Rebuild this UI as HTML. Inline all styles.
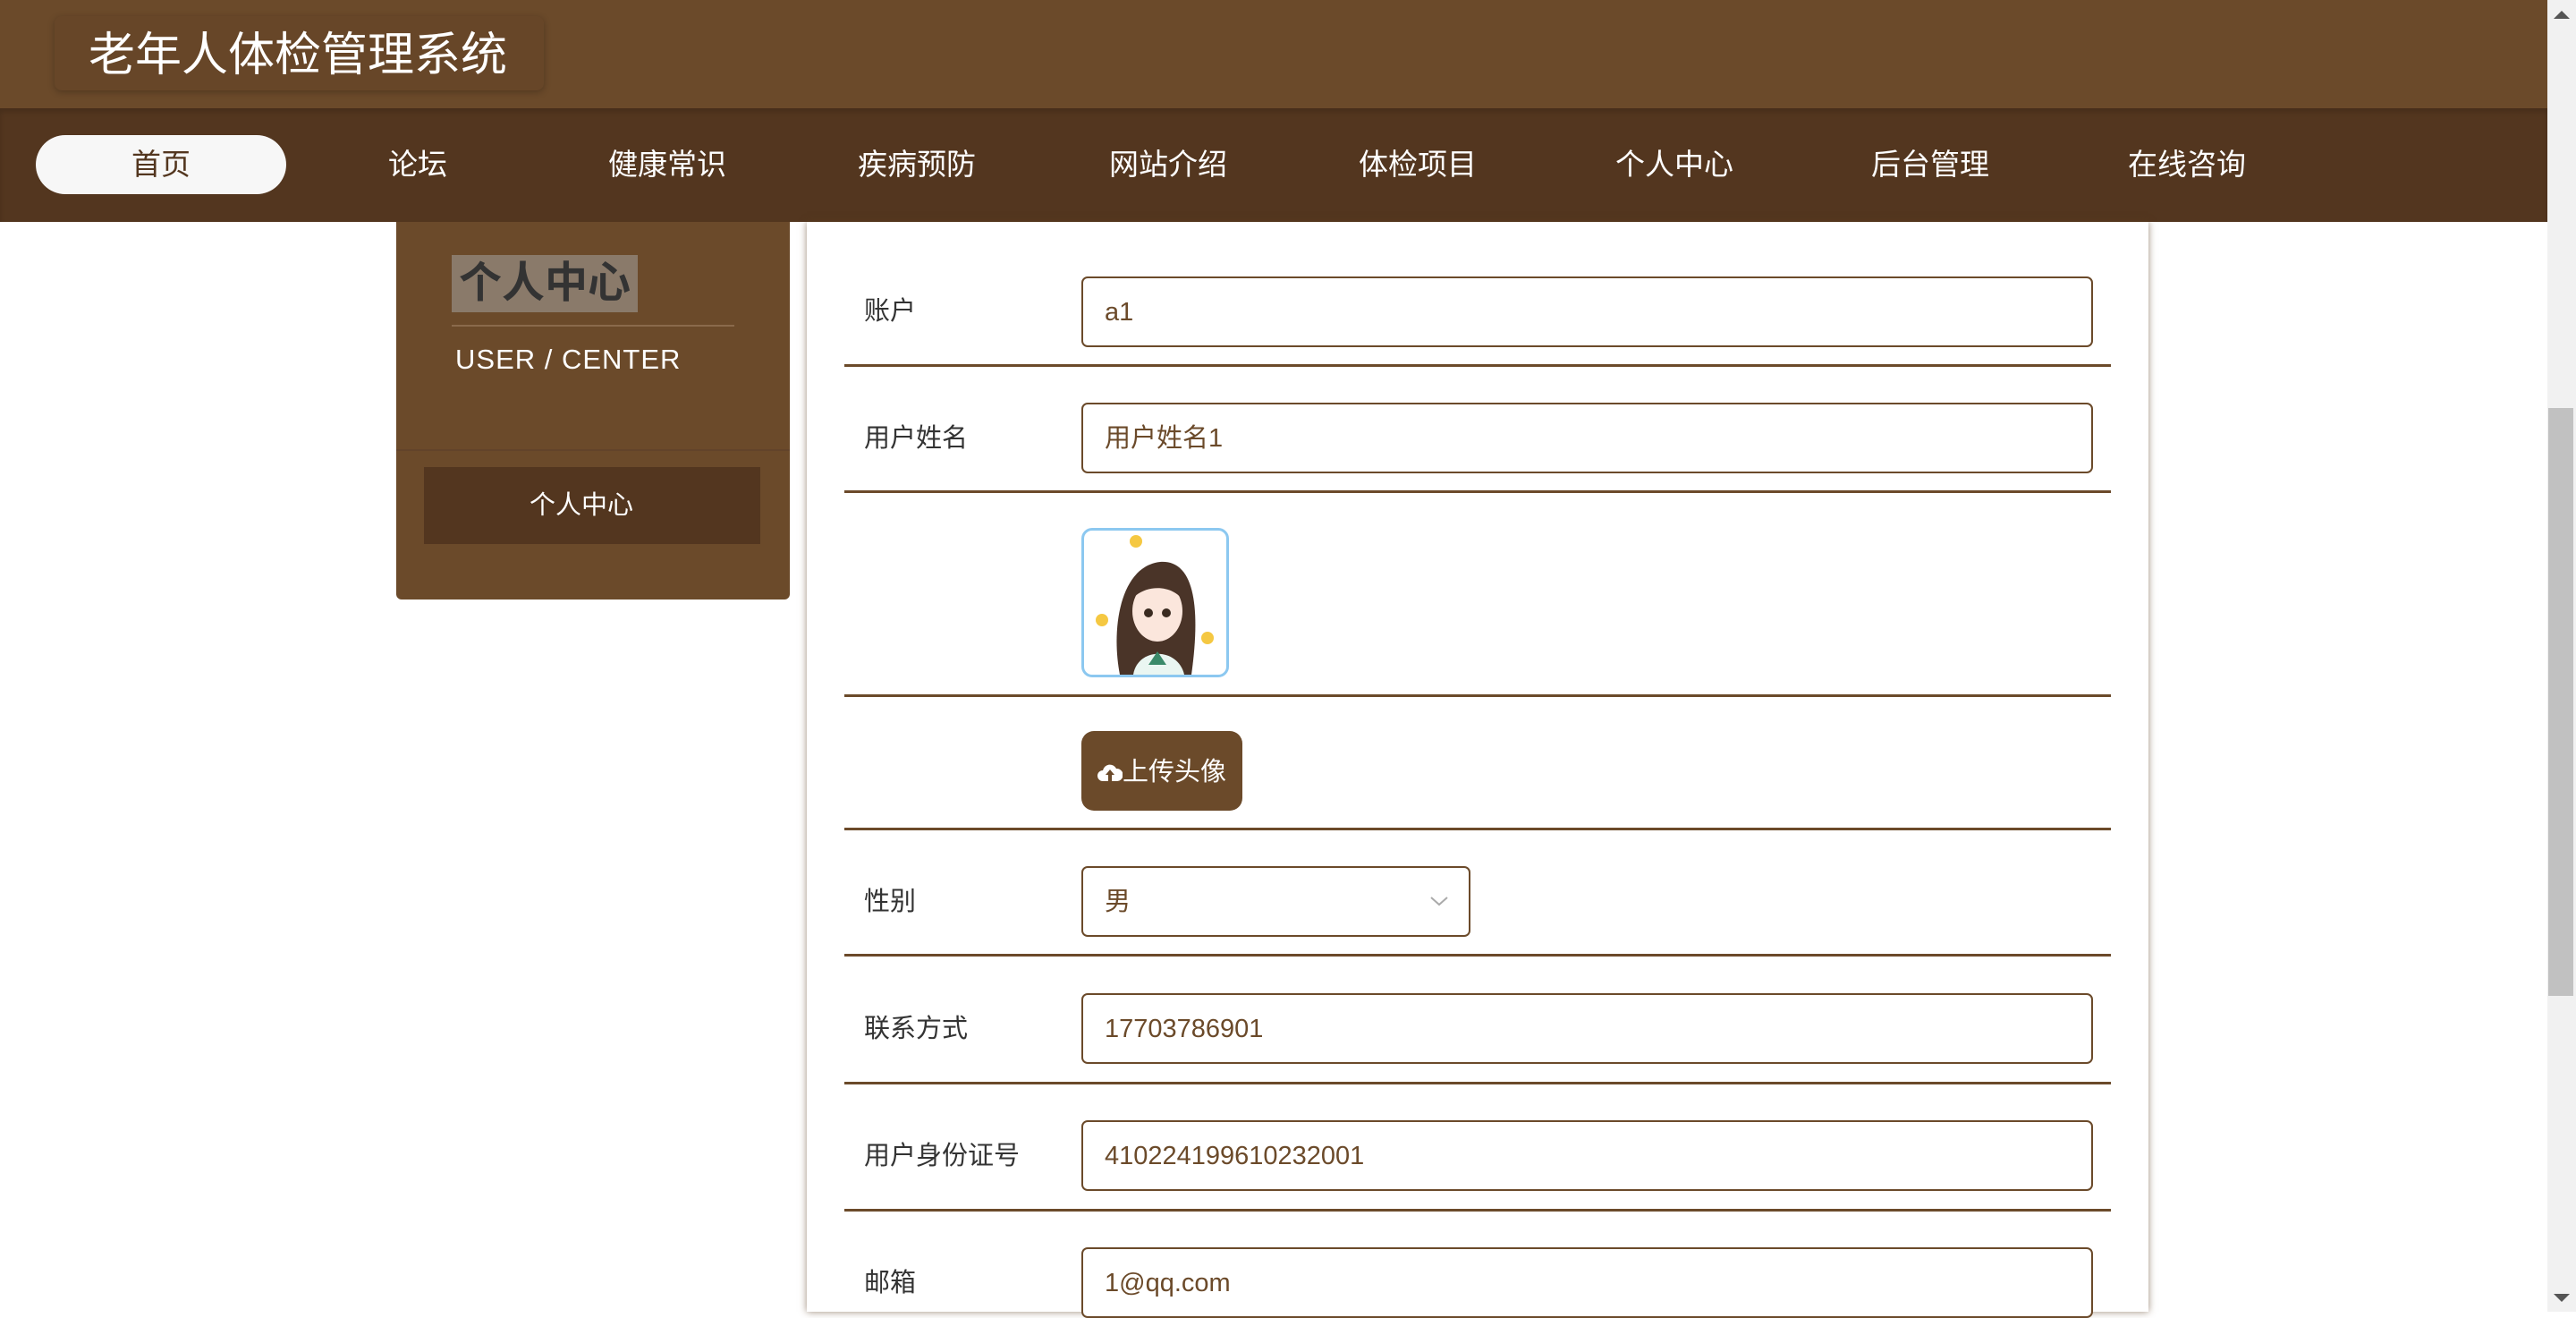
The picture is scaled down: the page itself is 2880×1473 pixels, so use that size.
<!DOCTYPE html>
<html><head><meta charset="utf-8"><style>
*{margin:0;padding:0;box-sizing:border-box}
body{width:2880px;height:1466px;overflow:hidden;background:#fff;font-family:"Liberation Sans","Noto Sans CJK SC",sans-serif;position:relative}
.a{position:absolute}
#hdr{left:0;top:0;width:2848px;height:121px;background:#6b4a2a}
#title{left:61px;top:18px;width:547px;height:83px;background:#674628;border-radius:8px;box-shadow:0 2px 8px rgba(0,0,0,.25);color:#fff;font-size:52px;line-height:89px;padding-left:38px}
#nav{left:0;top:121px;width:2848px;height:127px;background:#53361f;box-shadow:inset 0 4px 6px rgba(0,0,0,.15)}
.ni{top:151px;width:280px;height:66px;line-height:66px;text-align:center;color:#fff;font-size:33px}
.pill{background:#f7f7f7;color:#53361f;border-radius:33px}
#side{left:443px;top:248px;width:440px;height:422px;background:#6b4a2a;border-radius:0 0 6px 6px}
#main{left:902px;top:248px;width:1500px;height:1218px;background:#fff;box-shadow:0 0 8px rgba(90,60,30,.6)}
.sep{left:944px;width:1416px;height:3px;background:#6b4a2a}
.lb{left:966px;font-size:29px;color:#333}
.in{left:1209px;width:1131px;height:79px;border:2px solid #6b4a2a;border-radius:7px;font-size:29px;color:#6b4a2a;line-height:77px;padding-left:24px;background:#fff}
#sb{left:2848px;top:0;width:32px;height:1466px;background:#f1f1f1}
</style></head><body>
<div class="a" id="hdr"></div>
<div class="a" id="title">老年人体检管理系统</div>
<div class="a" id="nav"></div>
<div class="a ni pill" style="left:40px">首页</div>
<div class="a ni" style="left:327px">论坛</div>
<div class="a ni" style="left:606px">健康常识</div>
<div class="a ni" style="left:885px">疾病预防</div>
<div class="a ni" style="left:1166px">网站介绍</div>
<div class="a ni" style="left:1445px">体检项目</div>
<div class="a ni" style="left:1732px">个人中心</div>
<div class="a ni" style="left:2018px">后台管理</div>
<div class="a ni" style="left:2305px">在线咨询</div>

<div class="a" id="side"></div>
<div class="a" style="left:505px;top:285px;width:208px;height:64px;background:#8a7a6a;color:#333;font-size:48px;font-weight:bold;line-height:64px;text-align:center">个人中心</div>
<div class="a" style="left:505px;top:363px;width:316px;height:2px;background:#8a6a4c"></div>
<div class="a" style="left:509px;top:384px;color:#fff;font-size:31px;letter-spacing:1px">USER / CENTER</div>
<div class="a" style="left:443px;top:502px;width:440px;height:2px;background:#62432a"></div>
<div class="a" style="left:474px;top:522px;width:376px;height:86px;background:#53361f;color:#fff;font-size:29px;line-height:86px;text-align:center;padding-right:24px">个人中心</div>

<div class="a" id="main"></div>
<div class="a lb" style="top:324px">账户</div>
<div class="a in" style="top:309px">a1</div>
<div class="a sep" style="top:407px"></div>
<div class="a lb" style="top:466px">用户姓名</div>
<div class="a in" style="top:450px">用户姓名1</div>
<div class="a sep" style="top:548px"></div>
<div class="a" style="left:1209px;top:590px;width:165px;height:167px;border:3px solid #8cc8f0;border-radius:12px;overflow:hidden;background:#fff">
<svg width="159" height="161" viewBox="0 0 159 161"><path d="M40 161 C30 110 40 40 85 35 C125 32 130 90 120 161 Z" fill="#4a3428"/><ellipse cx="82" cy="90" rx="28" ry="34" fill="#fbe6dc"/><path d="M55 75 C60 45 110 45 112 80 C100 60 70 60 55 75Z" fill="#4a3428"/><circle cx="72" cy="92" r="5" fill="#3a2a20"/><circle cx="92" cy="92" r="5" fill="#3a2a20"/><path d="M55 161 C60 130 105 130 112 161Z" fill="#eaf6f2"/><path d="M72 150 l10 -15 l10 15z" fill="#3a8a6a"/><circle cx="58" cy="12" r="7" fill="#f5c842"/><circle cx="20" cy="100" r="7" fill="#f5c842"/><circle cx="138" cy="120" r="7" fill="#f5c842"/></svg></div>
<div class="a sep" style="top:776px"></div>
<div class="a" style="left:1209px;top:817px;width:180px;height:89px;background:#6b4a2a;border-radius:14px;color:#fff;font-size:29px;line-height:92px;padding-left:18px"><svg width="28" height="22" viewBox="0 0 28 22" style="vertical-align:-2px"><path d="M6 21 a6 6 0 0 1 0-12 a8 8 0 0 1 15-2 a6 6 0 0 1 1 14z" fill="#fff"/><path d="M14 8 l-5 6 h3 v7 h4 v-7 h3z" fill="#6b4a2a"/></svg>上传头像</div>
<div class="a sep" style="top:925px"></div>
<div class="a lb" style="top:984px">性别</div>
<div class="a in" style="top:968px;width:435px">男<svg class="a" style="right:22px;top:30px" width="22" height="14" viewBox="0 0 22 14"><path d="M2 3 l9 8 l9-8" fill="none" stroke="#aaa" stroke-width="2"/></svg></div>
<div class="a sep" style="top:1066px"></div>
<div class="a lb" style="top:1126px">联系方式</div>
<div class="a in" style="top:1110px">17703786901</div>
<div class="a sep" style="top:1209px"></div>
<div class="a lb" style="top:1268px">用户身份证号</div>
<div class="a in" style="top:1252px">410224199610232001</div>
<div class="a sep" style="top:1351px"></div>
<div class="a lb" style="top:1410px">邮箱</div>
<div class="a in" style="top:1394px">1@qq.com</div>

<div class="a" id="sb"></div>
<div class="a" style="left:2855px;top:12px;width:0;height:0;border-left:9px solid transparent;border-right:9px solid transparent;border-bottom:9px solid #555"></div>
<div class="a" style="left:2849px;top:456px;width:28px;height:657px;background:#c1c1c1"></div>
<div class="a" style="left:2855px;top:1446px;width:0;height:0;border-left:9px solid transparent;border-right:9px solid transparent;border-top:9px solid #555"></div>
</body></html>
